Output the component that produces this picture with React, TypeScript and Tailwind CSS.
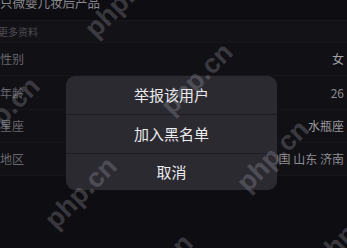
import React from "react";

const cjk = { fontFamily: '"Noto Sans CJK SC", "Noto Sans", sans-serif' };

function Mark({ x, y }: { x: number; y: number }) {
  return (
    <span
      className="absolute -translate-x-1/2 -translate-y-1/2 -rotate-45 whitespace-nowrap text-[27px] font-bold leading-none text-[rgba(205,205,215,0.23)] pointer-events-none"
      style={{ left: x, top: y, fontFamily: '"Liberation Sans", Arial, sans-serif' }}
    >
      php.cn
    </span>
  );
}

function Row({ label, value, valueClass }: { label: string; value: string; valueClass: string }) {
  return (
    <div className="flex h-[33px] items-center justify-between border-b border-[#17161c] bg-[#111015] pr-[3px]">
      <span className="text-[12px] text-[#68676d]">{label}</span>
      <span className={`text-[12px] whitespace-nowrap ${valueClass}`}>{value}</span>
    </div>
  );
}

export default function App() {
  return (
    <div className="relative h-[248px] w-[347px] overflow-hidden bg-[#0e0d12]" style={cjk}>
      <div className="flex flex-col">
        <div className="h-[21px] overflow-hidden border-b border-[#1a191f]">
          <div className="-mt-[3px] text-[12.5px] leading-[12px] text-[#8a898e]">只微婴儿妆后产品</div>
        </div>
        <div className="flex h-[22px] items-center bg-[#131217] border-b border-[#17161c]">
          <span className="-ml-[2px] text-[10px] text-[#4f4e54]">更多资料</span>
        </div>
        <Row label="性别" value="女" valueClass="text-[#a3a2a7]" />
        <div className="flex h-[34px] items-center justify-between border-b border-[#17161c] bg-[#111015] pr-[3px]">
          <span className="text-[12px] text-[#68676d]">年龄</span>
          <span className="text-[12px] whitespace-nowrap text-[#8b8a8f]">26</span>
        </div>
        <Row label="星座" value="水瓶座" valueClass="text-[#9a999e]" />
        <Row label="地区" value="中国 山东 济南" valueClass="text-[#8e8d92]" />
      </div>

      <div className="absolute left-[66px] top-[76px] flex w-[211px] flex-col overflow-hidden rounded-[9px] bg-[#2b2a31] text-[15px] text-[#ebebee]">
        <div className="flex h-[39px] items-center justify-center border-b border-[#1e1d23]">举报该用户</div>
        <div className="flex h-[39px] items-center justify-center border-b border-[#1e1d23]">加入黑名单</div>
        <div className="flex h-[36px] items-center justify-center">取消</div>
      </div>

      <Mark x={121} y={2} />
      <Mark x={197} y={79} />
      <Mark x={273} y={156} />
      <Mark x={349} y={233} />
      <Mark x={4} y={113} />
      <Mark x={81} y={193} />
      <Mark x={157} y={270} />
    </div>
  );
}
